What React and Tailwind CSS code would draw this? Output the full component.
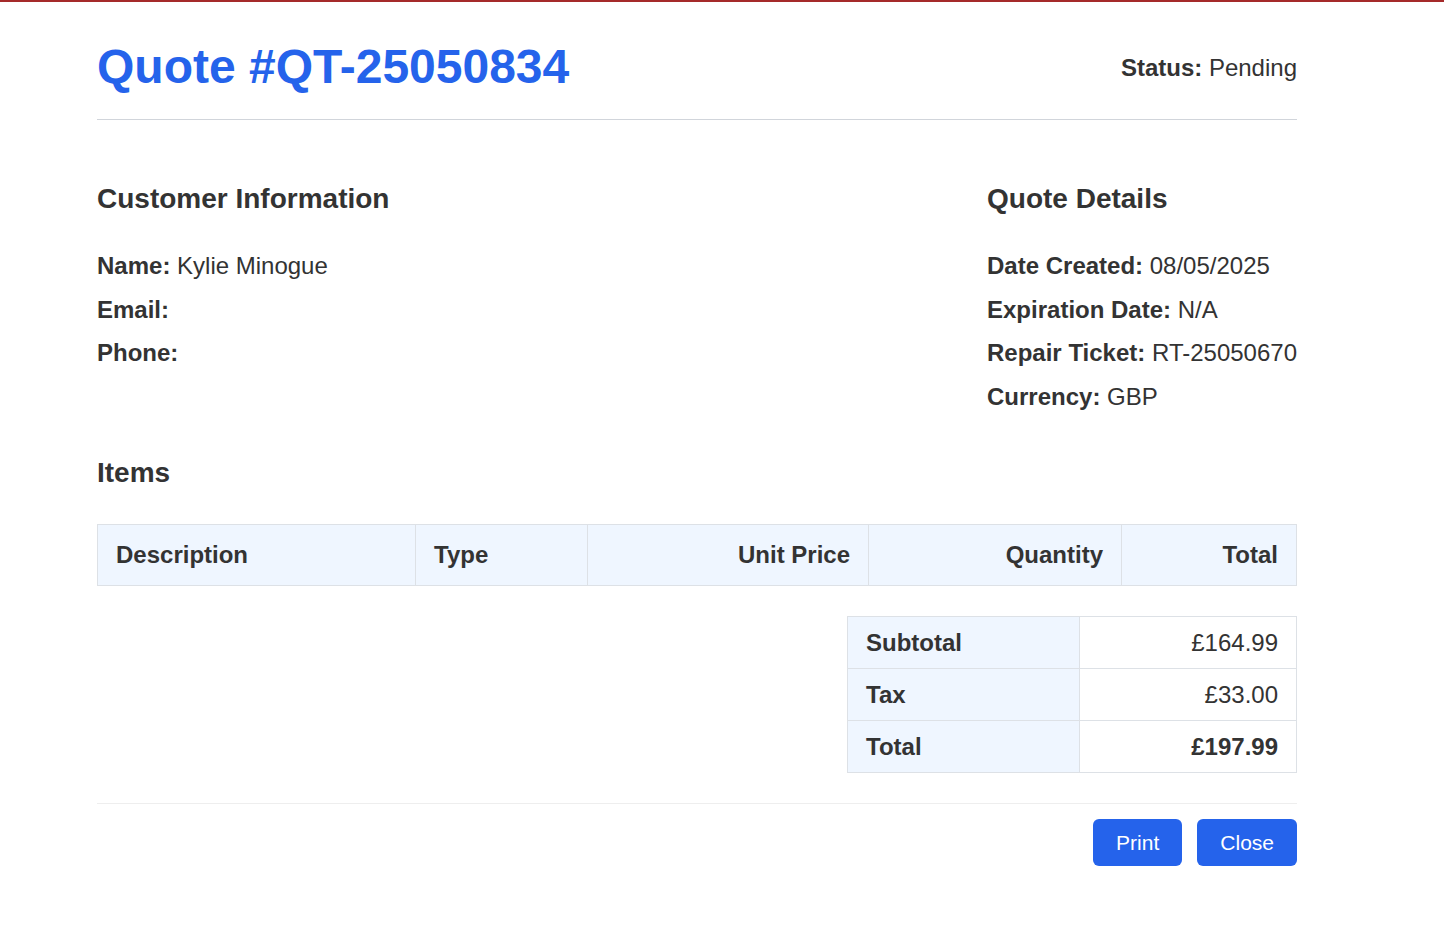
const customer = [
    { label: 'Name', value: 'Kylie Minogue' },
    { label: 'Email', value: '' },
    { label: 'Phone', value: '' },
];

const details = [
    { label: 'Date Created', value: '08/05/2025' },
    { label: 'Expiration Date', value: 'N/A' },
    { label: 'Repair Ticket', value: 'RT-25050670' },
    { label: 'Currency', value: 'GBP' },
];

const totals = [
    { label: 'Subtotal', value: '£164.99' },
    { label: 'Tax', value: '£33.00' },
    { label: 'Total', value: '£197.99', strong: true },
];

function InfoRow({ label, value }) {
    return (
        <p className="text-[24px] leading-[36px]">
            <span className="font-bold">{label}:</span>
            {value ? ` ${value}` : ''}
        </p>
    );
}

export default function App() {
    return (
        <div className="min-h-screen bg-white text-[#333] font-['Liberation_Sans',Arial,sans-serif]">
            <div className="h-[2px] bg-[#a52a2a]"></div>
            <div className="ml-[97px] w-[1200px] pt-[36px]">
                <header className="flex items-center justify-between pb-[23px] border-b border-[#d1d5db]">
                    <h1 className="text-[48px] leading-[57.6px] font-bold text-[#2563eb]">Quote #QT-25050834</h1>
                    <p className="text-[24px] leading-[36px] mt-[3px]">
                        <span className="font-bold">Status:</span> Pending
                    </p>
                </header>

                <section className="mt-[62px] flex items-start justify-between">
                    <div>
                        <h2 className="text-[28px] leading-[33.6px] font-bold">Customer Information</h2>
                        <div className="mt-[33px] flex flex-col gap-[7.5px]">
                            {customer.map((row) => (
                                <InfoRow key={row.label} {...row} />
                            ))}
                        </div>
                    </div>
                    <div>
                        <h2 className="text-[28px] leading-[33.6px] font-bold">Quote Details</h2>
                        <div className="mt-[33px] flex flex-col gap-[7.5px]">
                            {details.map((row) => (
                                <InfoRow key={row.label} {...row} />
                            ))}
                        </div>
                    </div>
                </section>

                <h2 className="mt-[41px] text-[28px] leading-[33.6px] font-bold">Items</h2>
                <table className="mt-[35px] w-full border-collapse text-[24px] leading-[36px]">
                    <thead>
                        <tr className="bg-[#eff6ff]">
                            <th className="w-[318px] border border-[#dde1e6] px-[18px] py-[12px] text-left font-bold">Description</th>
                            <th className="w-[172px] border border-[#dde1e6] px-[18px] py-[12px] text-left font-bold">Type</th>
                            <th className="w-[281px] border border-[#dde1e6] px-[18px] py-[12px] text-right font-bold">Unit Price</th>
                            <th className="w-[253px] border border-[#dde1e6] px-[18px] py-[12px] text-right font-bold">Quantity</th>
                            <th className="border border-[#dde1e6] px-[18px] py-[12px] text-right font-bold">Total</th>
                        </tr>
                    </thead>
                    <tbody></tbody>
                </table>

                <table className="mt-[30px] ml-auto w-[450px] border-collapse text-[24px] leading-[36px]">
                    <tbody>
                        {totals.map((row) => (
                            <tr key={row.label}>
                                <td className="w-[232px] border border-[#dde1e6] bg-[#eff6ff] px-[18px] py-[7.5px] font-bold">{row.label}</td>
                                <td className={`border border-[#dde1e6] px-[18px] py-[7.5px] text-right ${row.strong ? 'font-bold' : ''}`}>{row.value}</td>
                            </tr>
                        ))}
                    </tbody>
                </table>

                <div className="mt-[30px] border-t border-[#eeeeee] pt-[15px] flex justify-end gap-[15px]">
                    <button className="h-[47px] px-[23px] rounded-[6px] bg-[#2563eb] text-white text-[21px]">Print</button>
                    <button className="h-[47px] px-[23px] rounded-[6px] bg-[#2563eb] text-white text-[21px]">Close</button>
                </div>
            </div>
        </div>
    );
}
